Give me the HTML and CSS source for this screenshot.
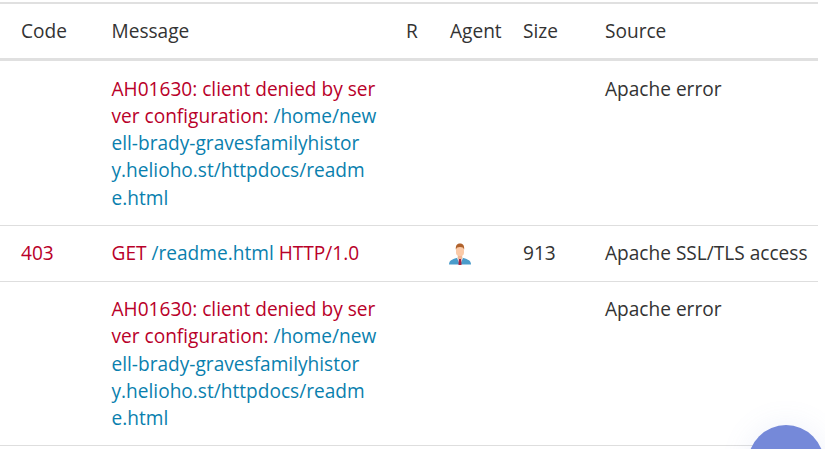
FILE: index.html
```html
<!DOCTYPE html>
<html lang="en">
<head>
<meta charset="utf-8">
<title>Logs</title>
<link rel="stylesheet" href="styles.css">
</head>
<body>
<table class="log">
<colgroup><col class="c-code"><col class="c-msg"><col class="c-r"><col class="c-agent"><col class="c-size"><col class="c-src"></colgroup>
<thead>
<tr><th>Code</th><th>Message</th><th>R</th><th>Agent</th><th>Size</th><th>Source</th></tr>
</thead>
<tbody>
<tr>
<td></td>
<td class="msg err">AH01630: client denied by server configuration: <a href="#">/home/newell-brady-gravesfamilyhistor<br>y.helioho.st/httpdocs/readm<br>e.html</a></td>
<td></td><td></td><td></td>
<td>Apache error</td>
</tr>
<tr class="mid">
<td class="err">403</td>
<td class="msg err">GET <a href="#">/readme.html</a> HTTP/1.0</td>
<td></td>
<td><svg class="agent" viewBox="0 0 24 24" width="24" height="24" aria-hidden="true">
<path d="M1 22.500C1 18.500 4 17.500 8.500 16L12 15.500L15.500 16C20 17.500 23 18.500 23 22.500Z" fill="#4a9ccb"/>
<path d="M9 16L12 23L15 16Z" fill="#f4f4f4"/>
<path d="M10.800 17H13.200L13.500 23H10.500Z" fill="#a8243f"/>
<rect x="9.800" y="12" width="4.400" height="5" fill="#f0b795"/>
<rect x="8" y="3" width="8" height="11" rx="3.500" fill="#fbcaa8"/>
<path d="M7.800 7.500C7.500 3 9.500 1.500 12 1.500S16.500 3 16.200 7.500C15.500 5.800 14.500 5 12 5S8.500 5.800 7.800 7.500Z" fill="#b0622c"/>
</svg></td>
<td>913</td>
<td>Apache SSL/TLS access</td>
</tr>
<tr>
<td></td>
<td class="msg err">AH01630: client denied by server configuration: <a href="#">/home/newell-brady-gravesfamilyhistor<br>y.helioho.st/httpdocs/readm<br>e.html</a></td>
<td></td><td></td><td></td>
<td>Apache error</td>
</tr>
</tbody>
</table>
<div class="fab"></div>
</body>
</html>
```
FILE: styles.css
```css
html, body { margin: 0; padding: 0; height: 100%; overflow: hidden; background: #fff; }
body { padding-top: 2px; box-sizing: border-box; font-family: "Open Sans", sans-serif; font-size: 19.100px; line-height: 27.300px; color: #333; }
.log { width: 818px; table-layout: fixed; border-collapse: separate; border-spacing: 0; }
.c-code { width: 90.500px; }
.c-msg { width: 294.500px; }
.c-r { width: 44px; }
.c-agent { width: 73px; }
.c-size { width: 82px; }
.c-src { width: 234px; }
th { font-weight: 400; text-align: left; padding: 14px 0 12.900px 21px; border-top: 2px solid #e0e0e0; border-bottom: 3px solid #e0e0e0; white-space: nowrap; }
td { vertical-align: top; padding: 14.400px 0 12.900px 21px; border-bottom: 1px solid #dedede; }
.msg { padding-right: 7px; word-break: break-all; }
.err { color: #b90029; }
a { color: #0a7fae; text-decoration: none; }
td:last-child { white-space: nowrap; }
.agent { display: block; margin: 1.500px 0 0 -2px; }
.fab { position: fixed; left: 748px; top: 425px; width: 76px; height: 76px; border-radius: 50%; background: #7589d9; box-shadow: 0 0 30px rgba(117, 137, 217, .12); }
```
